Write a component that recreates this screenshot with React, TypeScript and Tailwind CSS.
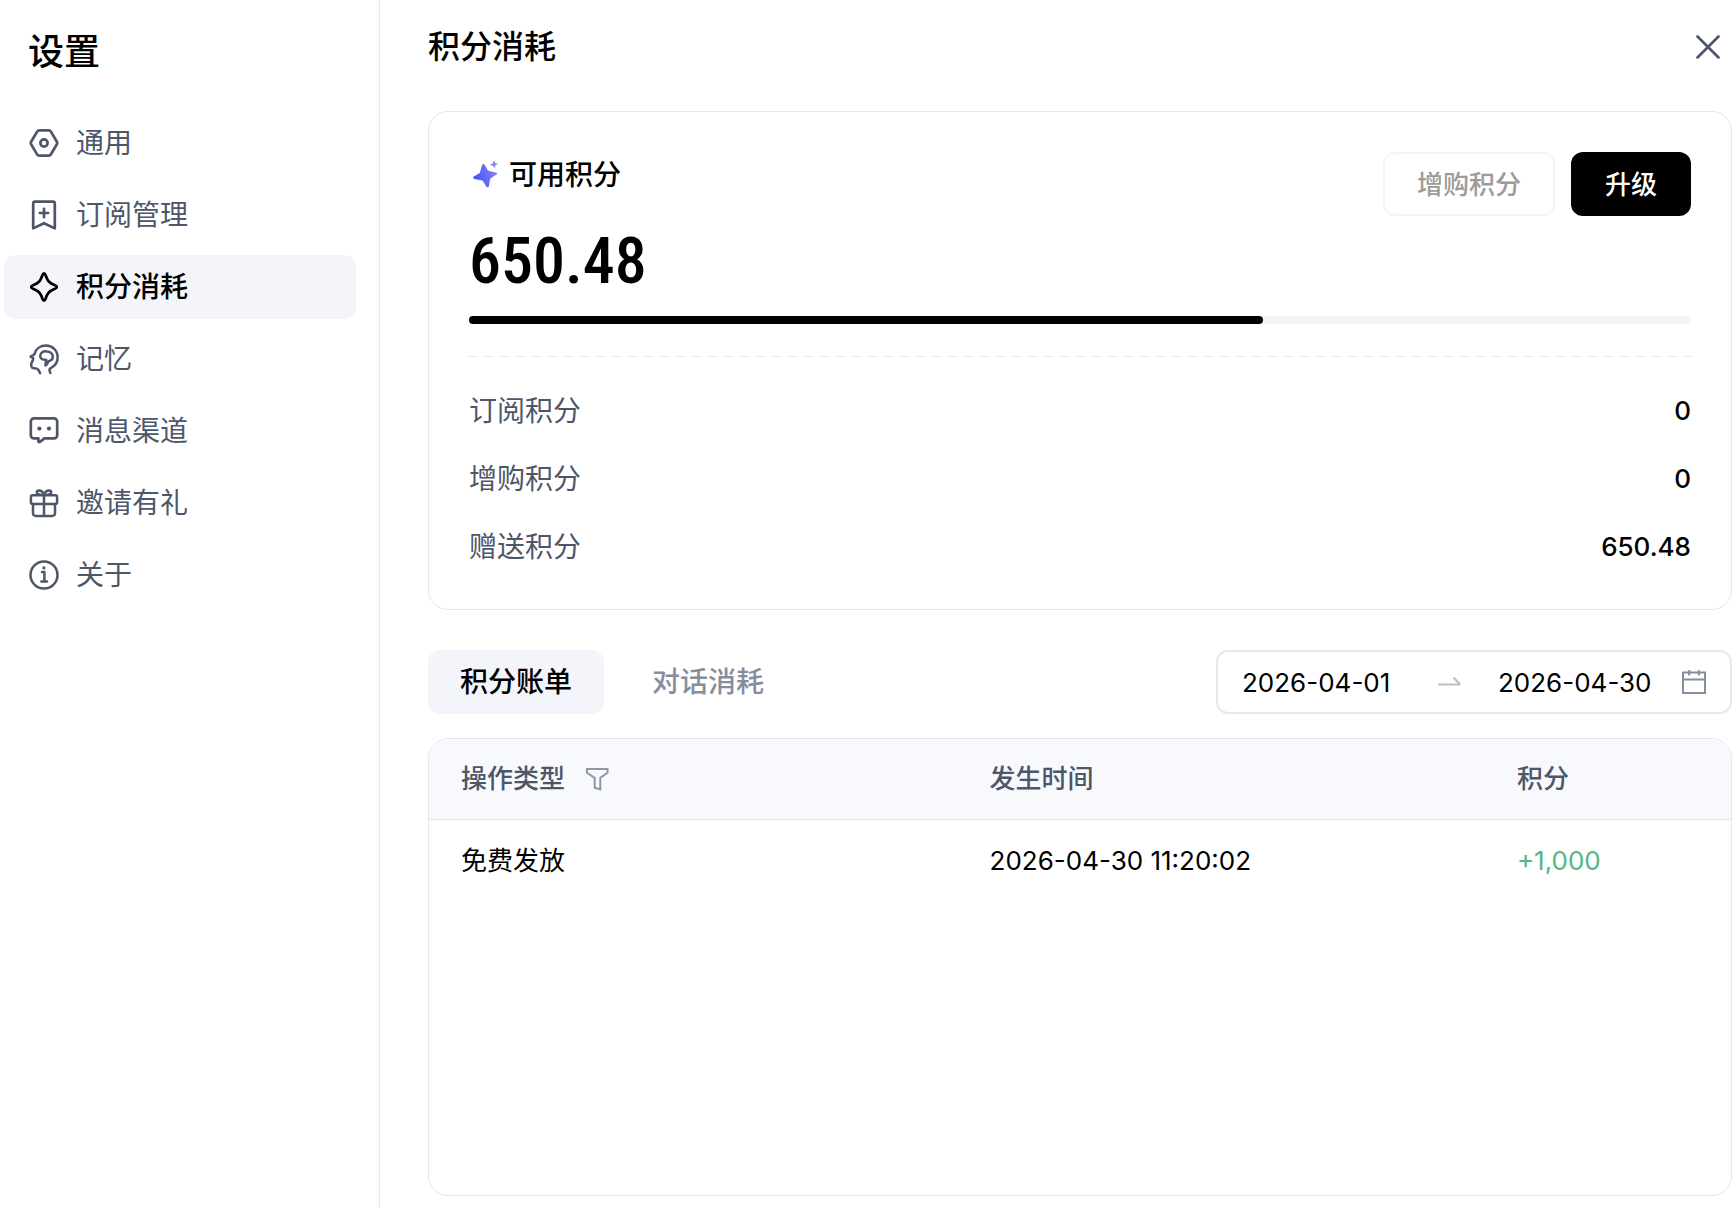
import React, { useState } from 'react';

type IconProps = { className?: string };

const line = {
  viewBox: '0 0 32 32',
  fill: 'none',
  stroke: 'currentColor',
  strokeWidth: 2.7,
  strokeLinecap: 'round' as const,
  strokeLinejoin: 'round' as const,
  'aria-hidden': true,
};

const GeneralIcon = ({ className }: IconProps) => (
  <svg {...line} className={className}>
    <path d="M11.3 3.400h9.400a2.600 2.600 0 0 1 2.200 1.300l6 10a2.400 2.400 0 0 1 0 2.600l-6 10a2.600 2.600 0 0 1-2.200 1.300h-9.400a2.600 2.600 0 0 1-2.200-1.300l-6-10a2.400 2.400 0 0 1 0-2.600l6-10a2.600 2.600 0 0 1 2.200-1.300Z" />
    <circle cx="16" cy="16" r="3.600" />
  </svg>
);

const SubscriptionIcon = ({ className }: IconProps) => (
  <svg {...line} className={className}>
    <path d="M5.2 29.4V4.4a1.8 1.8 0 0 1 1.8-1.8h18a1.8 1.8 0 0 1 1.8 1.8v25L16 24.2Z" />
    <path d="M16 9.8v8.4M11.8 14h8.4" />
  </svg>
);

const SparkIcon = ({ className }: IconProps) => (
  <svg {...line} className={className}>
    <path d="M16 2.4c.9 0 1.2.7 1.6 1.9 1.5 4.5 2.9 7.5 9.3 9.9 1.3.5 1.9.9 1.9 1.800s-.6 1.300-1.900 1.800c-6.400 2.400-7.800 5.400-9.300 9.900-.4 1.200-.7 1.900-1.600 1.900s-1.200-.7-1.600-1.900c-1.500-4.500-2.900-7.500-9.300-9.900-1.300-.5-1.900-.9-1.900-1.800s.6-1.300 1.900-1.800c6.400-2.400 7.800-5.400 9.300-9.900.4-1.200.7-1.900 1.600-1.900Z" />
  </svg>
);

const MemoryIcon = ({ className }: IconProps) => (
  <svg {...line} strokeWidth={2.5} className={className}>
    <path d="M22.4 30c-.8-1.5-1.3-3-.5-4.2.5-.7 1.5-1 2.5-1.7a11.6 11.6 0 0 0 5.2-9.9C29.6 7.4 24.4 2.600 18 2.600c-5.500 0-9.900 3-11.200 7.800-.3.9-.9 1.400-1.600 1.800L2.600 13.600l2.600 1.500-.4 2.600-1.300 2.200c-.4 1.300-.4 2.600 0 3.800.4 1.100 1.300 1.500 2.600 1.500 2.600 0 3.700.3 4.500 1.900l1.500 3" />
    <path d="M18.200 16.800c-3.800.2-6-1.200-6-3.800 0-3.400 3-5.200 6.600-4.600 3.400.2 6 2.400 6 5.200 0 2.600-2 4.200-4.200 4.600-.7 1.900-1.700 3.200-3.200 4.200l.8-5.600Z" />
  </svg>
);

const ChannelIcon = ({ className }: IconProps) => (
  <svg {...line} className={className}>
    <path d="M6 3.4h20a3.2 3.2 0 0 1 3.2 3.2v13.6a3.2 3.2 0 0 1-3.2 3.2h-9.600l-4.200 3.400c-.9.700-1.800.3-1.800-.8v-2.600H6a3.200 3.200 0 0 1-3.200-3.200V6.600A3.200 3.200 0 0 1 6 3.400Z" />
    <circle cx="11.4" cy="13.6" r="2.1" fill="currentColor" stroke="none" />
    <circle cx="21" cy="13.6" r="2.1" fill="currentColor" stroke="none" />
  </svg>
);

const GiftIcon = ({ className }: IconProps) => (
  <svg {...line} strokeWidth={2.500} className={className}>
    <rect x="2.9" y="8.2" width="26.2" height="8.8" rx="2" />
    <path d="M5 17v9.4A2.6 2.6 0 0 0 7.6 29h16.800a2.600 2.600 0 0 0 2.600-2.600V17M16 8.200V29" />
    <path d="M16 8c-.6-3-2.500-4.600-5.400-4.600-1.900 0-2.400 1.600-1.400 2.900C10.400 7.800 13 8 16 8ZM16 8c.6-3 2.500-4.600 5.400-4.600 1.900 0 2.400 1.600 1.400 2.900C21.600 7.800 19 8 16 8Z" />
  </svg>
);

const AboutIcon = ({ className }: IconProps) => (
  <svg {...line} strokeWidth={2.500} className={className}>
    <circle cx="16" cy="16" r="13.5" />
    <path d="M14 13h2.400v9.400M13.400 22.600h5.600" />
    <circle cx="15.9" cy="8.9" r="1.6" fill="currentColor" stroke="none" />
  </svg>
);

const CreditsIcon = ({ className }: IconProps) => (
  <svg viewBox="0 0 32 32" className={className} aria-hidden="true">
    <defs>
      <linearGradient id="credits" x1="4" y1="20" x2="28" y2="12" gradientUnits="userSpaceOnUse">
        <stop offset="0.15" stopColor="#4a55f5" />
        <stop offset="1" stopColor="#8d87fb" />
      </linearGradient>
    </defs>
    <path
      fill="url(#credits)"
      d="M13.2 5.700c.5-1 1.700-1 2.300-.1l3 5.200c.4.700 1 1.100 1.700 1.300l6.900 1.300c1.200.3 1.400 1.600.4 2.200l-5.300 3.300c-.6.400-1 1-1.200 1.700l-1.100 6.700c-.3 1.200-1.900 1.400-2.500.4l-3.100-5.200c-.4-.6-1-1-1.700-1.200L5.300 20c-1.200-.3-1.400-1.800-.4-2.400l5.100-3.100c.6-.4 1-.9 1.100-1.600Z"
    />
    <path fill="url(#credits)" d="m25 1.200 1.200 2.700 2.900.9-2.600 1.500-.8 3-1.800-2.500-3.100-.7 2.700-1.700Z" />
  </svg>
);

const navItems = [
  { label: '通用', Icon: GeneralIcon },
  { label: '订阅管理', Icon: SubscriptionIcon },
  { label: '积分消耗', Icon: SparkIcon },
  { label: '记忆', Icon: MemoryIcon },
  { label: '消息渠道', Icon: ChannelIcon },
  { label: '邀请有礼', Icon: GiftIcon },
  { label: '关于', Icon: AboutIcon },
];

const balances = [
  { label: '订阅积分', value: '0' },
  { label: '增购积分', value: '0' },
  { label: '赠送积分', value: '650.48' },
];

const records = [{ type: '免费发放', time: '2026-04-30 11:20:02', amount: '+1,000' }];

function Sidebar() {
  const [active, setActive] = useState('积分消耗');
  return (
    <aside className="w-[380px] shrink-0 border-r border-[#e5e6ea] pt-7 pr-[23px] pl-1">
      <h1 className="pl-6 text-4xl leading-[48px] font-medium">设置</h1>
      <nav className="mt-[35px] flex flex-col gap-2">
        {navItems.map(({ label, Icon }) => (
          <button
            key={label}
            type="button"
            onClick={() => setActive(label)}
            aria-current={active === label ? 'page' : undefined}
            className={`flex h-16 items-center gap-4 rounded-xl px-6 text-[28px] ${
              active === label ? 'bg-[#f4f5fa] font-medium text-black' : 'text-[#4e566a]'
            }`}
          >
            <Icon className="size-8" />
            {label}
          </button>
        ))}
      </nav>
    </aside>
  );
}

function CreditsCard() {
  return (
    <section className="rounded-[20px] border border-[#e5e6ea] p-10">
      <div className="flex items-start justify-between">
        <div>
          <h3 className="flex items-center gap-2 text-[28px] leading-[46px] font-medium">
            <CreditsIcon className="size-8" />
            可用积分
          </h3>
          <p className="mt-5 font-['Roboto_Condensed',Roboto,sans-serif] text-[64px] leading-[88px] font-medium">
            650.48
          </p>
        </div>
        <div className="flex gap-4">
          <button
            type="button"
            disabled
            className="h-16 rounded-xl border-2 border-[#f5f5f5] px-8 text-[26px] font-medium text-[#9b9b9b]"
          >
            增购积分
          </button>
          <button type="button" className="h-16 rounded-xl bg-black px-[34px] text-[26px] font-medium text-white">
            升级
          </button>
        </div>
      </div>
      <div className="mt-[10px] h-2 rounded-full bg-[#f4f5fa]">
        <div className="h-2 w-[65%] rounded-full bg-black" />
      </div>
      <div className="my-8 h-px bg-[repeating-linear-gradient(90deg,#e2e3e6_0_8px,transparent_8px_16px)]" />
      <dl className="flex flex-col gap-6 text-[28px] leading-[44px]">
        {balances.map(({ label, value }) => (
          <div key={label} className="flex justify-between">
            <dt className="text-[#4e566a]">{label}</dt>
            <dd className="text-[26px] font-medium">{value}</dd>
          </div>
        ))}
      </dl>
    </section>
  );
}

function Toolbar({ tab, onTab }: { tab: string; onTab: (t: string) => void }) {
  const [from, setFrom] = useState('2026-04-01');
  const [to, setTo] = useState('2026-04-30');
  return (
    <div className="mt-10 flex justify-between">
      <div role="tablist" className="flex gap-4">
        {['积分账单', '对话消耗'].map((name) => (
          <button
            key={name}
            type="button"
            role="tab"
            aria-selected={tab === name}
            onClick={() => onTab(name)}
            className={`h-16 rounded-xl px-8 text-[28px] font-medium ${
              tab === name ? 'bg-[#f4f5fa] text-black' : 'text-[#868d9f]'
            }`}
          >
            {name}
          </button>
        ))}
      </div>
      <div className="flex h-16 w-[516px] items-center rounded-xl border-2 border-[#e5e9ef] px-6 text-[26px]">
        <input
          aria-label="开始日期"
          value={from}
          onChange={(e) => setFrom(e.target.value)}
          className="w-[180px] min-w-0 outline-none"
        />
        <svg viewBox="0 0 24 24" className="mr-9 ml-4 size-6 shrink-0 text-[#bfbfbf]" fill="none" stroke="currentColor" strokeWidth="2.200" aria-hidden="true">
          <path d="M0 14.500h22l-6.500-7" strokeLinejoin="bevel" />
        </svg>
        <input
          aria-label="结束日期"
          value={to}
          onChange={(e) => setTo(e.target.value)}
          className="w-0 min-w-0 flex-1 outline-none"
        />
        <svg viewBox="0 0 24 24" className="size-6 shrink-0 text-[#868d9f]" fill="none" stroke="currentColor" strokeWidth="2" aria-hidden="true">
          <path d="M1 2.500h22v20.500H1ZM1 9.500h22M7.200 0v5.500M16.800 0v5.500" />
        </svg>
      </div>
    </div>
  );
}

function RecordsTable() {
  return (
    <div className="mt-6 flex-1 overflow-hidden rounded-[20px] border border-[#e5e6ea]">
      <table className="w-full table-fixed text-left text-[26px]">
        <thead>
          <tr className="h-20 border-b border-[#e5e6ea] bg-[#f8f9fd] text-[#4e566a]">
            <th className="w-[40.6%] px-8 font-medium">
              <div className="flex items-center gap-5">
                操作类型
                <button type="button" aria-label="筛选" className="text-[#8f96a7]">
                  <svg viewBox="0 0 24 24" className="size-6" fill="none" stroke="currentColor" strokeWidth="2" aria-hidden="true">
                    <path d="M2 2h20.500v3.800l-7.200 5V22.500l-5.600-1.800V10.800L2 5.800Z" />
                  </svg>
                </button>
              </div>
            </th>
            <th className="w-[40.5%] px-8 font-medium">发生时间</th>
            <th className="px-8 font-medium">积分</th>
          </tr>
        </thead>
        <tbody>
          {records.map((r) => (
            <tr key={r.time} className="h-[82px]">
              <td className="px-8">{r.type}</td>
              <td className="px-8">{r.time}</td>
              <td className="px-8 text-[#55b685]">{r.amount}</td>
            </tr>
          ))}
        </tbody>
      </table>
    </div>
  );
}

export default function App() {
  const [tab, setTab] = useState('积分账单');
  return (
    <div className="flex min-h-screen bg-white font-[Inter,'Noto_Sans_CJK_SC',sans-serif] text-black">
      <Sidebar />
      <main className="flex min-w-0 flex-1 flex-col pt-[23px] pr-0.5 pb-3 pl-12">
        <header className="mb-10 flex items-center justify-between pr-2">
          <h2 className="text-[32px] leading-[48px] font-medium">积分消耗</h2>
          <button type="button" aria-label="关闭" className="text-[#4e566a]">
            <svg {...line} className="size-8">
              <path d="m5.500 5.500 21 21M26.500 5.500l-21 21" />
            </svg>
          </button>
        </header>
        <CreditsCard />
        <Toolbar tab={tab} onTab={setTab} />
        <RecordsTable />
      </main>
    </div>
  );
}
